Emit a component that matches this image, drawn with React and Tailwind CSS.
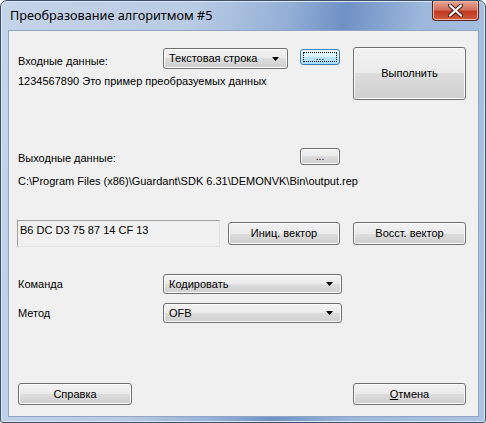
const SKIN =
  "rounded-[3px] border border-[#707070] bg-[linear-gradient(#f2f2f2_0%,#ebebeb_50%,#dddddd_50%,#cfcfcf_100%)] shadow-[inset_0_0_0_1px_#fbfbfb] text-black";

function Button({ className = "", children }) {
  return <div className={`${SKIN} flex items-center justify-center ${className}`}>{children}</div>;
}

function Arrow() {
  return (
    <svg width="7" height="4" viewBox="0 0 7 4">
      <path d="M0 0h7L3.5 4z" fill="#000" />
    </svg>
  );
}

function Combo({ className = "", children }) {
  return (
    <div className={`${SKIN} flex items-center justify-between pl-[5px] pr-[8px] ${className}`}>
      <span>{children}</span>
      <Arrow />
    </div>
  );
}

export default function App() {
  return (
    <div className="w-[486px] h-[423px] rounded-t-[7px] rounded-b-[3px] border border-[#3d4f6b] bg-[linear-gradient(100deg,#c4d4e9_0%,#b9cbe4_35%,#93afd7_52%,#6f91c5_62%,#9db8dc_76%,#abc4e3_100%)] shadow-[inset_0_0_0_1px_#dde7f3] font-['Liberation_Sans',Arial,sans-serif] text-[11px] text-black overflow-hidden">
      {/* title bar */}
      <div className="h-[29px] flex items-start justify-between">
        <div className="pl-[9px] pt-[6px] font-['Noto_Sans',sans-serif] text-[12.7px] leading-[17px] text-black">
          Преобразование алгоритмом #5
        </div>
        <div className="mr-[6px] w-[47px] h-[20px] rounded-b-[4px] border border-t-0 border-[#5a2520] bg-[linear-gradient(#e8a596_0%,#d3725f_45%,#c23a22_55%,#cf5a3c_100%)] shadow-[inset_0_0_0_1px_#f0b8a8] flex items-center justify-center">
          <svg width="15" height="13" viewBox="0 0 15 13">
            <path
              d="M2 1.5L13 11.5M13 1.5L2 11.5"
              stroke="#4a1a14"
              strokeWidth="4.2"
              strokeLinecap="round"
            />
            <path
              d="M2 1.5L13 11.5M13 1.5L2 11.5"
              stroke="#fff"
              strokeWidth="2.2"
              strokeLinecap="round"
            />
          </svg>
        </div>
      </div>

      {/* client area */}
      <div className="ml-[7px] w-[471px] h-[387px] border border-[#8ea5c4] bg-[#f0f0f0] pl-[9px] flex flex-col">
        {/* input section */}
        <div className="mt-[16px] flex items-start">
          <div className="w-[322px] flex flex-col">
            <div className="mt-[1px] h-[21px] flex items-start">
              <div className="w-[145px] h-[21px] pt-[6px] leading-[14px]">Входные данные:</div>
              <Combo className="w-[125px] h-[21px]">Текстовая строка</Combo>
              <div className="ml-[12px] mt-[1px] w-[40px] h-[16px] rounded-[3px] border border-[#3c7fb1] bg-[linear-gradient(#eaf6fd_0%,#d9f0fc_50%,#bee6fd_50%,#a7d9f5_100%)] p-[2px]">
                <div className="w-full h-full border border-dotted border-black flex items-center justify-center leading-[10px] text-[10px]">
                  ...
                </div>
              </div>
            </div>
            <div className="mt-[5px] leading-[14px]">1234567890 Это пример преобразуемых данных</div>
          </div>
          <Button className="ml-[13px] w-[113px] h-[53px]">Выполнить</Button>
        </div>

        {/* output section */}
        <div className="mt-[48px] h-[17px] flex items-center">
          <div className="w-[282px] leading-[14px] pt-[2px]">Выходные данные:</div>
          <Button className="w-[40px] h-[17px] text-[10px] leading-[10px]">...</Button>
        </div>
        <div className="mt-[9px] leading-[14px]">
          C:\Program Files (x86)\Guardant\SDK 6.31\DEMONVK\Bin\output.rep
        </div>

        {/* vector section */}
        <div className="mt-[32px] flex items-center">
          <div className="ml-[-1px] w-[203px] h-[27px] border border-[#a0a0a0] border-r-[#e3e3e3] border-b-[#e3e3e3] bg-[#f0f0f0] px-[2px] pt-[2px] leading-[14px]">
            B6 DC D3 75 87 14 CF 13
          </div>
          <Button className="ml-[8px] w-[112px] h-[23px]">Иниц. вектор</Button>
          <Button className="ml-[13px] w-[113px] h-[23px]">Восст. вектор</Button>
        </div>

        {/* command / method */}
        <div className="mt-[27px] h-[20px] flex items-center">
          <div className="w-[145px]">Команда</div>
          <Combo className="w-[179px] h-[20px]">Кодировать</Combo>
        </div>
        <div className="mt-[9px] h-[20px] flex items-center">
          <div className="w-[145px]">Метод</div>
          <Combo className="w-[179px] h-[20px]">OFB</Combo>
        </div>

        {/* bottom buttons */}
        <div className="mt-[60px] flex items-center">
          <Button className="w-[114px] h-[22px]">Справка</Button>
          <Button className="ml-[221px] w-[113px] h-[22px]">
            <span>
              <u>О</u>тмена
            </span>
          </Button>
        </div>
      </div>
    </div>
  );
}
